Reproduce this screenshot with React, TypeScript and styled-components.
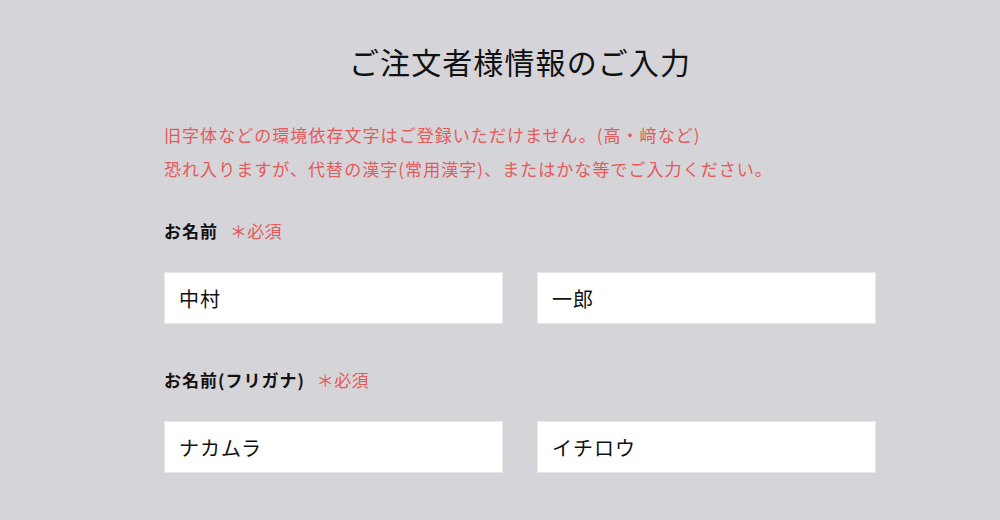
import React from "react";
import styled, { createGlobalStyle } from "styled-components";

const Global = createGlobalStyle`
  html, body { margin: 0; padding: 0; background: #d5d4d9; }
  body { font-family: "Noto Sans CJK JP", "Noto Sans", sans-serif; color: #111; }
`;

const Page = styled.div`
  width: 712px;
  margin-left: 164px;
  padding-top: 37px;
`;

const Title = styled.h1`
  margin: 0;
  text-align: center;
  font-size: 30px;
  font-weight: 400;
  line-height: 48px;
  color: #111;
  letter-spacing: 1.1px;
`;

const Notice = styled.p`
  margin: 33px 0 0;
  color: #e25a5a;
  font-size: 17px;
  line-height: 34px;
  letter-spacing: 1.05px;
`;

const Field = styled.section<{ $top: number }>`
  margin-top: ${(p) => p.$top}px;
`;

const Label = styled.div`
  display: flex;
  align-items: center;
  gap: 12px;
  font-size: 17px;
  line-height: 24px;
  font-weight: 700;
  color: #111;
  letter-spacing: 1px;
`;

const Required = styled.span`
  font-weight: 400;
  font-size: 17px;
  color: #e25a5a;
  letter-spacing: 0.3px;
`;

const Row = styled.div`
  display: grid;
  grid-template-columns: 1fr 1fr;
  gap: 34px;
  margin-top: 29px;
`;

const Input = styled.input`
  box-sizing: border-box;
  height: 52px;
  width: 100%;
  border: 1px solid #e8e8ea;
  background: #fff;
  padding: 0 14px;
  font-family: "Noto Sans CJK JP", "Noto Sans", sans-serif;
  font-size: 20px;
  font-weight: 400;
  color: #111;
  letter-spacing: 1px;
  outline: none;
`;

export default function App() {
  return (
    <>
      <Global />
      <Page>
        <Title>ご注文者様情報のご入力</Title>
        <Notice>
          旧字体などの環境依存文字はご登録いただけません。(高・﨑など)
          <br />
          恐れ入りますが、代替の漢字(常用漢字)、またはかな等でご入力ください。
        </Notice>
        <Field $top={33}>
          <Label>
            お名前<Required>＊必須</Required>
          </Label>
          <Row>
            <Input defaultValue="中村" />
            <Input defaultValue="一郎" />
          </Row>
        </Field>
        <Field $top={44}>
          <Label>
            お名前(フリガナ)<Required>＊必須</Required>
          </Label>
          <Row>
            <Input defaultValue="ナカムラ" />
            <Input defaultValue="イチロウ" />
          </Row>
        </Field>
      </Page>
    </>
  );
}
